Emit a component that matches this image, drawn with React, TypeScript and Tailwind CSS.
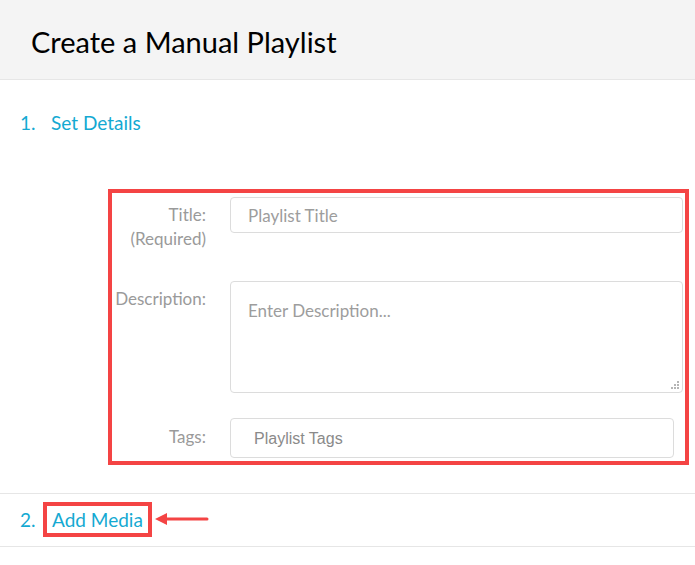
export default function App() {
  const font = { fontFamily: 'Lato, "Open Sans", sans-serif' };
  return (
    <div className="min-h-screen bg-white" style={font}>
      {/* header */}
      <div className="h-[80px] bg-[#f4f4f4] border-b border-[#e6e6e6] pl-[31px] flex items-center">
        <h1 className="text-[29px] leading-none text-black pt-[3px]">Create a Manual Playlist</h1>
      </div>

      {/* step 1 */}
      <div className="pt-[31px] pl-[20px] flex text-[19px] leading-[24px] text-[#14a9d2]">
        <span className="w-[31px]">1.</span>
        <span>Set Details</span>
      </div>

      {/* form */}
      <div className="ml-[108px] mr-[6px] mt-[54px] border-4 border-[#f44444] pt-[4px] pb-[3px] pr-[2px] text-[17px] leading-[24px]">
        <div className="flex">
          <div className="w-[94px] shrink-0 text-right text-[#9a9a9a] mt-[6px]">
            Title:
            <br />
            (Required)
          </div>
          <input
            className="ml-[24px] flex-1 h-[36px] border border-[#dcdcdc] rounded-[4px] pl-[17px] text-[17px] placeholder:text-[#9d9d9d] outline-none"
            placeholder="Playlist Title"
          />
        </div>
        <div className="flex mt-[30px]">
          <div className="w-[94px] shrink-0 text-right text-[#9a9a9a] mt-[6px]">Description:</div>
          <div className="relative ml-[24px] flex-1 h-[112px]">
            <textarea
              className="w-full h-full resize-none border border-[#dcdcdc] rounded-[4px] pl-[17px] pt-[17px] text-[17px] leading-[24px] placeholder:text-[#9d9d9d] outline-none"
              placeholder="Enter Description..."
            />
            <svg width="8" height="8" viewBox="0 0 8 8" className="absolute right-[4px] bottom-[4px]">
              <rect x="0" y="6" width="2" height="2" fill="#b5b5b5" />
              <rect x="3" y="6" width="2" height="2" fill="#b5b5b5" />
              <rect x="6" y="6" width="2" height="2" fill="#b5b5b5" />
              <rect x="3" y="3" width="2" height="2" fill="#b5b5b5" />
              <rect x="6" y="3" width="2" height="2" fill="#b5b5b5" />
              <rect x="6" y="0" width="2" height="2" fill="#b5b5b5" />
            </svg>
          </div>
        </div>
        <div className="flex mt-[25px] pr-[9px]">
          <div className="w-[94px] shrink-0 text-right text-[#9a9a9a] mt-[7px]">Tags:</div>
          <input
            className="ml-[24px] flex-1 h-[40px] border border-[#dcdcdc] rounded-[4px] pl-[23px] pt-[1px] text-[16px] placeholder:text-[#8a8a8a] outline-none"
            style={{ fontFamily: '"Liberation Sans", Arial, sans-serif' }}
            placeholder="Playlist Tags"
          />
        </div>
      </div>

      {/* step 2 */}
      <div className="mt-[28px] border-t border-b border-[#e6e6e6] h-[54px] pl-[20px] pt-[8px] flex items-start text-[19px] text-[#14a9d2]">
        <span className="w-[23px] leading-[35px]">2.</span>
        <span className="border-4 border-[#f44444] px-[5px] leading-[27px]">Add Media</span>
        <svg width="54" height="14" viewBox="0 0 54 14" className="ml-[3px] mt-[10px]">
          <line x1="8" y1="7" x2="52" y2="7" stroke="#f44444" strokeWidth="3" strokeLinecap="round" />
          <polygon points="0,7 12,1 12,13" fill="#f44444" />
        </svg>
      </div>
    </div>
  );
}
